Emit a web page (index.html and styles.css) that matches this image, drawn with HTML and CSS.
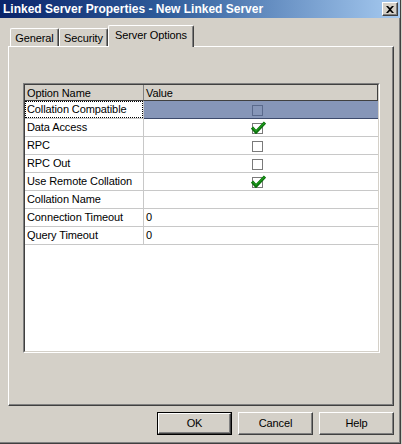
FILE: index.html
```html
<!DOCTYPE html>
<html>
<head>
<meta charset="utf-8">
<link rel="stylesheet" href="styles.css">
</head>
<body>
<div class="window">
  <div class="titlebar">
    <span class="title">Linked Server Properties - New Linked Server</span>
    <div class="close">
      <svg width="8" height="7" viewBox="0 0 8 7"><path d="M0 0h2l2 2 2-2h2L5 3.5 8 7H6L4 5 2 7H0l3-3.5z" fill="#000"/></svg>
    </div>
  </div>
  <div class="tabs">
    <div class="tab tab-general">General</div>
    <div class="tab tab-security">Security</div>
    <div class="tab tab-active">Server Options</div>
  </div>
  <div class="panel">
    <div class="grid-outer">
      <div class="grid-inner">
        <table class="grid">
          <colgroup><col class="c-name"><col class="c-value"></colgroup>
          <thead>
            <tr><th class="h-name">Option Name</th><th class="h-value">Value</th></tr>
          </thead>
          <tbody>
            <tr class="selected"><td class="name"><span class="focus">Collation Compatible</span></td><td class="value"><span class="cb cb-sel"></span></td></tr>
            <tr><td class="name">Data Access</td><td class="value"><span class="cb"><svg class="tick" width="15" height="13" viewBox="0 0 15 13"><path d="M1 6.5 L5 11 L14 1.5" fill="none" stroke="#0b6f0b" stroke-width="3.2"/><path d="M1.6 6.6 L5 10.2 L13.6 1.7" fill="none" stroke="#1d9a1d" stroke-width="1.2"/></svg></span></td></tr>
            <tr><td class="name">RPC</td><td class="value"><span class="cb"></span></td></tr>
            <tr><td class="name">RPC Out</td><td class="value"><span class="cb"></span></td></tr>
            <tr><td class="name">Use Remote Collation</td><td class="value"><span class="cb"><svg class="tick" width="15" height="13" viewBox="0 0 15 13"><path d="M1 6.5 L5 11 L14 1.5" fill="none" stroke="#0b6f0b" stroke-width="3.2"/><path d="M1.6 6.6 L5 10.2 L13.6 1.7" fill="none" stroke="#1d9a1d" stroke-width="1.2"/></svg></span></td></tr>
            <tr><td class="name">Collation Name</td><td class="value text"></td></tr>
            <tr><td class="name">Connection Timeout</td><td class="value text">0</td></tr>
            <tr><td class="name">Query Timeout</td><td class="value text">0</td></tr>
          </tbody>
        </table>
      </div>
    </div>
  </div>
  <div class="buttons">
    <div class="btn-default"><div class="btn">OK</div></div>
    <div class="btn">Cancel</div>
    <div class="btn">Help</div>
  </div>
</div>
</body>
</html>
```

FILE: styles.css
```css
* { box-sizing: border-box; }
html, body {
  margin: 0;
  padding: 0;
  background: #d4d0c8;
}
body {
  font-family: "Liberation Sans", Arial, sans-serif;
  font-size: 11px;
  letter-spacing: -0.1px;
  color: #000;
}
.window {
  width: 401px;
  height: 444px;
  background: #d4d0c8;
  border-right: 1px solid #404040;
  border-bottom: 1px solid #404040;
  box-shadow: inset -1px -1px 0 #808080;
  overflow: hidden;
}
.titlebar {
  height: 18px;
  display: flex;
  align-items: center;
  justify-content: space-between;
  background: linear-gradient(to right, #0a246a 0%, #2d5a99 40%, #a6caf0 100%);
  padding-left: 3px;
  padding-right: 2px;
}
.title {
  color: #fff;
  font-weight: bold;
  font-size: 12px;
  letter-spacing: 0;
}
.close {
  width: 16px;
  height: 14px;
  background: #d4d0c8;
  border-top: 1px solid #fff;
  border-left: 1px solid #fff;
  border-right: 1px solid #404040;
  border-bottom: 1px solid #404040;
  box-shadow: inset -1px -1px 0 #808080;
  display: flex;
  align-items: center;
  justify-content: center;
  padding-right: 1px;
}
.tabs {
  height: 28px;
  display: flex;
  align-items: flex-end;
  padding-left: 10px;
}
.tab {
  height: 18px;
  background: #d4d0c8;
  border-top: 1px solid #fff;
  border-left: 1px solid #fff;
  border-right: 1px solid #404040;
  box-shadow: inset -1px 0 0 #808080;
  border-radius: 2px 2px 0 0;
  padding-top: 3px;
  text-align: center;
  white-space: nowrap;
}
.tab-general { width: 49px; }
.tab-security { width: 49px; }
.tab-active {
  width: 86px;
  height: 22px;
  margin-bottom: -1px;
  position: relative;
  z-index: 1;
  padding-top: 3px;
}
.panel {
  margin-left: 8px;
  width: 386px;
  height: 360px;
  border-top: 1px solid #fff;
  border-left: 1px solid #fff;
  border-right: 1px solid #404040;
  border-bottom: 1px solid #404040;
  box-shadow: inset -1px -1px 0 #808080;
  padding: 36px 0 0 14px;
}
.grid-outer {
  width: 357px;
  height: 270px;
  border-top: 1px solid #808080;
  border-left: 1px solid #808080;
  border-right: 1px solid #fff;
  border-bottom: 1px solid #fff;
}
.grid-inner {
  width: 100%;
  height: 100%;
  background: #fff;
  border-top: 1px solid #404040;
  border-left: 1px solid #404040;
  border-right: 1px solid #d4d0c8;
  border-bottom: 1px solid #d4d0c8;
}
.grid {
  border-collapse: separate;
  border-spacing: 0;
  table-layout: fixed;
  width: 353px;
}
.c-name { width: 119px; }
.c-value { width: 234px; }
.grid th {
  height: 16px;
  background: #d4d0c8;
  font-weight: normal;
  text-align: left;
  padding: 0 0 0 2px;
  border-bottom: 1px solid #404040;
  line-height: 14px;
  white-space: nowrap;
}
.h-name { border-right: 1px solid #808080; }
.h-value { border-right: 1px solid #404040; }
.grid td {
  height: 18px;
  padding: 0;
  border-bottom: 1px solid #c8c8c8;
  white-space: nowrap;
  line-height: 17px;
}
.grid td.name {
  border-right: 1px solid #c8c8c8;
  padding-left: 2px;
}
.grid tr.selected td.name {
  padding-left: 0;
}
.focus {
  display: block;
  height: 17px;
  padding-left: 2px;
  outline: 1px dotted #000;
  outline-offset: -1px;
}
.grid td.value {
  padding-left: 108px;
  vertical-align: top;
}
.grid td.value.text {
  padding-left: 2px;
  vertical-align: middle;
}
.grid tr.selected td.value {
  background: #8696b8;
  border-bottom-color: #3c4a6c;
}
.cb {
  display: inline-block;
  position: relative;
  width: 11px;
  height: 11px;
  margin-top: 4px;
  background: #fff;
  border: 1px solid #7a7a7a;
  vertical-align: top;
}
.cb-sel {
  background: #8696b8;
  border-color: #5a6a8c;
}
.tick {
  position: absolute;
  left: -2px;
  top: -3px;
}
.buttons {
  display: flex;
  justify-content: flex-end;
  align-items: center;
  gap: 6px;
  margin-top: 6px;
  padding-right: 6px;
}
.btn {
  width: 75px;
  height: 23px;
  background: #d4d0c8;
  border-top: 1px solid #fff;
  border-left: 1px solid #fff;
  border-right: 1px solid #404040;
  border-bottom: 1px solid #404040;
  box-shadow: inset -1px -1px 0 #808080;
  display: flex;
  align-items: center;
  justify-content: center;
  padding-bottom: 1px;
}
.btn-default {
  width: 75px;
  height: 23px;
  border: 1px solid #000;
}
.btn-default .btn {
  width: 73px;
  height: 21px;
}
```
